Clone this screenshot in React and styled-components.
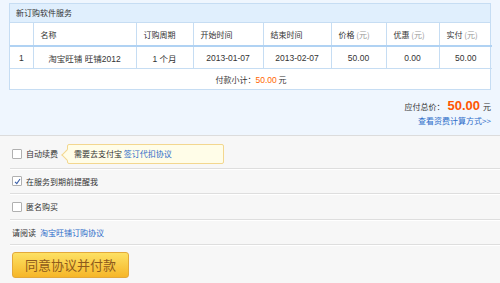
import React from "react";
import styled, { createGlobalStyle } from "styled-components";

const Global = createGlobalStyle`
  body {
    margin: 0;
    background: #f7f7f7;
    font-family: "Noto Sans CJK SC", "Liberation Sans", sans-serif;
    font-size: 8px;
    color: #333;
  }
`;

const Page = styled.div`
  width: 500px;
  height: 283px;
  overflow: hidden;
  background: #f7f7f7;
`;

const OrderPanel = styled.div`
  background: #eff6fe;
  padding: 3px 9px 0 9px;
  height: 132px;
  border-bottom: 1px solid #dcdcdc;
`;

const Box = styled.div`
  border: 1px solid #c6ddf3;
  background: #fff;
`;

const Title = styled.div`
  height: 18px;
  line-height: 18px;
  padding-left: 6px;
  background: #e0effd;
  border-bottom: 1px solid #c6ddf3;
`;

const Table = styled.table`
  width: 100%;
  border-collapse: collapse;
  table-layout: fixed;
`;

const Th = styled.th`
  font-weight: normal;
  text-align: left;
  padding: 0 0 0 7px;
  height: 22px;
  border-left: 1px solid #c6ddf3;
  border-bottom: 2px solid #b0d2f3;
  &:first-child { border-left: none; }
`;

const Unit = styled.span`
  color: #999;
`;

const Td = styled.td`
  text-align: center;
  height: 21px;
  padding: 0;
  font-family: "Liberation Sans", "Noto Sans CJK SC", sans-serif;
  font-size: 8.5px;
  border-left: 1px solid #c6ddf3;
  border-bottom: 1px solid #c6ddf3;
  &:first-child { border-left: none; }
`;

const SubTotal = styled.td`
  text-align: center;
  height: 20px;
  padding: 0;
`;

const Orange = styled.span`
  color: #ff6600;
  font-family: "Liberation Sans", sans-serif;
  font-size: 8.5px;
`;

const Summary = styled.div`
  display: flex;
  flex-direction: column;
  align-items: flex-end;
  padding-top: 8px;
  gap: 2px;
`;

const TotalLine = styled.div`
  display: flex;
  align-items: baseline;
  gap: 3px;
`;

const Big = styled.span`
  color: #ff5500;
  font-family: "Liberation Sans", sans-serif;
  font-weight: bold;
  font-size: 13px;
`;

const Link = styled.a`
  color: #2d6cc9;
  text-decoration: none;
  cursor: pointer;
`;

const Options = styled.div`
  padding: 3px 0 0 10px;
`;

const Row = styled.div`
  display: flex;
  align-items: center;
  gap: 4px;
  height: ${p => p.h || 24}px;
  padding-left: 2px;
  border-bottom: 1px solid #dedede;
  box-shadow: 0 1px 0 #fff;
`;

const Check = styled.span`
  width: 8px;
  height: 8px;
  border: 1px solid #b0b0b0;
  background: #fff;
  display: inline-flex;
  align-items: center;
  justify-content: center;
  border-radius: 1px;
`;

const Tip = styled.div`
  position: relative;
  box-sizing: border-box;
  margin-left: 5px;
  height: 20px;
  width: 157px;
  display: flex;
  align-items: center;
  padding-left: 6px;
  background: #fffde8;
  border: 1px solid #f3d78f;
  border-radius: 2px;
  &::before {
    content: "";
    position: absolute;
    left: -5px;
    top: 6px;
    width: 7px;
    height: 7px;
    background: #fffde8;
    border-left: 1px solid #f3d78f;
    border-bottom: 1px solid #f3d78f;
    transform: rotate(45deg);
  }
`;

const PayButton = styled.button`
  margin-top: 7px;
  margin-left: 2px;
  width: 117px;
  height: 26px;
  border: 1px solid #e3a93a;
  border-radius: 3px;
  background: linear-gradient(#fde164, #f6b628);
  color: #8e5a1c;
  font-family: "Noto Sans CJK SC", sans-serif;
  font-size: 13px;
  padding: 0;
  line-height: 24px;
  cursor: pointer;
`;

const cols = [23, 103, 57, 70, 68, 55, 53, 53];

export default function App() {
  return (
    <Page>
      <Global />
      <OrderPanel>
        <Box>
          <Title>新订购软件服务</Title>
          <Table>
            <colgroup>
              {cols.map((w, i) => <col key={i} style={{ width: w }} />)}
            </colgroup>
            <thead>
              <tr>
                <Th></Th>
                <Th>名称</Th>
                <Th>订购周期</Th>
                <Th>开始时间</Th>
                <Th>结束时间</Th>
                <Th>价格 <Unit>(元)</Unit></Th>
                <Th>优惠 <Unit>(元)</Unit></Th>
                <Th>实付 <Unit>(元)</Unit></Th>
              </tr>
            </thead>
            <tbody>
              <tr>
                <Td>1</Td>
                <Td>淘宝旺铺 旺铺2012</Td>
                <Td>1 个月</Td>
                <Td>2013-01-07</Td>
                <Td>2013-02-07</Td>
                <Td>50.00</Td>
                <Td>0.00</Td>
                <Td>50.00</Td>
              </tr>
              <tr>
                <SubTotal colSpan={8}>
                  付款小计：<Orange>50.00</Orange> 元
                </SubTotal>
              </tr>
            </tbody>
          </Table>
        </Box>
        <Summary>
          <TotalLine>
            <span>应付总价：</span>
            <Big>50.00</Big>
            <span>元</span>
          </TotalLine>
          <Link>查看资费计算方式&gt;&gt;</Link>
        </Summary>
      </OrderPanel>
      <Options>
        <Row h={29}>
          <Check />
          <span>自动续费</span>
          <Tip>
            需要去支付宝&nbsp;<Link>签订代扣协议</Link>
          </Tip>
        </Row>
        <Row>
          <Check>
            <svg width="7" height="7" viewBox="0 0 7 7">
              <path d="M1 3.8 L2.8 5.6 L6 1" fill="none" stroke="#3a5fa8" strokeWidth="1.1" />
            </svg>
          </Check>
          <span>在服务到期前提醒我</span>
        </Row>
        <Row h={25}>
          <Check />
          <span>匿名购买</span>
        </Row>
        <Row h={24}>
          <span>请阅读</span>
          <Link>淘宝旺铺订购协议</Link>
        </Row>
        <PayButton>同意协议并付款</PayButton>
      </Options>
    </Page>
  );
}
